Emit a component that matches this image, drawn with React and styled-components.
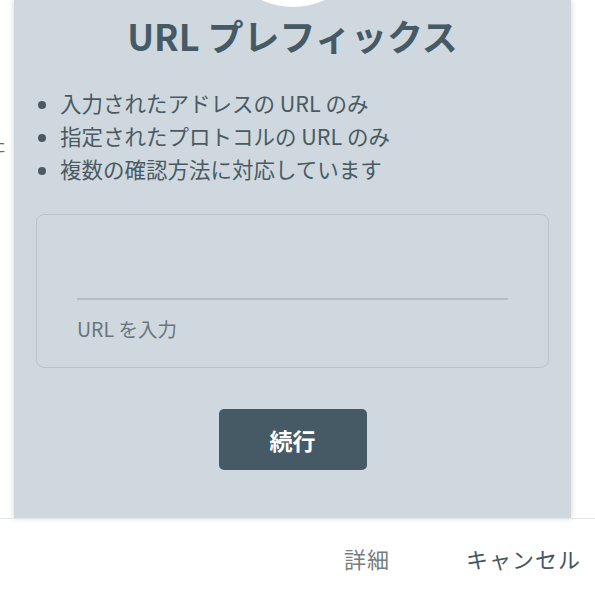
import React from "react";
import styled, { createGlobalStyle } from "styled-components";

const GlobalStyle = createGlobalStyle`
  html, body {
    margin: 0;
    padding: 0;
    background: #ffffff;
    overflow: hidden;
  }
  body {
    font-family: "Noto Sans CJK JP", "Noto Sans", sans-serif;
  }
`;

const items = [
  "入力されたアドレスの URL のみ",
  "指定されたプロトコルの URL のみ",
  "複数の確認方法に対応しています",
];

const App = () => {
  return (
    <Page>
      <GlobalStyle />
      <Main>
        <Aside>
          <AsideText>た</AsideText>
        </Aside>
        <Card>
          <Badge />
          <Title>URL プレフィックス</Title>
          <List>
            {items.map((item) => (
              <Item key={item}>{item}</Item>
            ))}
          </List>
          <InputBox>
            <Underline />
            <InputLabel>URL を入力</InputLabel>
          </InputBox>
          <ContinueButton>続行</ContinueButton>
        </Card>
      </Main>
      <Footer>
        <FooterButton $muted>詳細</FooterButton>
        <FooterButton>キャンセル</FooterButton>
      </Footer>
    </Page>
  );
};

const Page = styled.div`
  width: 595px;
  height: 592px;
  display: flex;
  flex-direction: column;
  overflow: hidden;
`;

const Main = styled.div`
  display: flex;
  height: 518px;
`;

const Aside = styled.div`
  width: 14px;
  flex-shrink: 0;
  display: flex;
  justify-content: flex-end;
  overflow: hidden;
  padding-top: 132px;
`;

const AsideText = styled.span`
  font-size: 18px;
  line-height: 24px;
  color: #5f6b72;
  margin-right: 8px;
  white-space: nowrap;
`;

const Card = styled.div`
  width: 557px;
  height: 518px;
  flex-shrink: 0;
  background: #cfd8de;
  box-shadow: 0 0 6px rgba(0, 0, 0, 0.18);
  display: flex;
  flex-direction: column;
  align-items: center;
  box-sizing: border-box;
`;

const Badge = styled.div`
  width: 150px;
  height: 150px;
  border-radius: 50%;
  background: #ffffff;
  margin-top: -143px;
  flex-shrink: 0;
`;

const Title = styled.h1`
  margin: 7px 0 0;
  font-size: 36px;
  line-height: 43px;
  font-weight: 700;
  color: #455a64;
`;

const List = styled.ul`
  align-self: stretch;
  margin: 29px 0 0;
  padding: 0 0 0 46px;
  list-style: disc;
`;

const Item = styled.li`
  font-size: 21.5px;
  line-height: 33px;
  color: #4b5a62;
  &::marker {
    color: #4b5a62;
    font-size: 20px;
  }
`;

const InputBox = styled.div`
  align-self: stretch;
  margin: 29px 22px 0;
  height: 154px;
  box-sizing: border-box;
  border: 1px solid #b9c3c9;
  border-radius: 8px;
  padding: 83px 40px 0;
  display: flex;
  flex-direction: column;
`;

const Underline = styled.div`
  height: 2px;
  background: #b2bcc2;
`;

const InputLabel = styled.div`
  margin-top: 15px;
  font-size: 19.5px;
  line-height: 28px;
  color: #6a757b;
`;

const ContinueButton = styled.button`
  margin-top: 41px;
  width: 148px;
  height: 61px;
  border: none;
  border-radius: 5px;
  background: #465a66;
  color: #ffffff;
  font-family: "Noto Sans CJK JP", "Noto Sans", sans-serif;
  font-size: 23px;
  font-weight: 700;
  cursor: pointer;
`;

const Footer = styled.div`
  flex: 1;
  border-top: 1px solid #e3e6e8;
  display: flex;
  justify-content: flex-end;
  align-items: center;
  gap: 76px;
  padding: 5px 14px 0 0;
`;

const FooterButton = styled.span`
  font-size: 22px;
  line-height: 30px;
  letter-spacing: 1px;
  color: ${(p) => (p.$muted ? "#777d80" : "#455660")};
  font-weight: 400;
`;

export default App;
